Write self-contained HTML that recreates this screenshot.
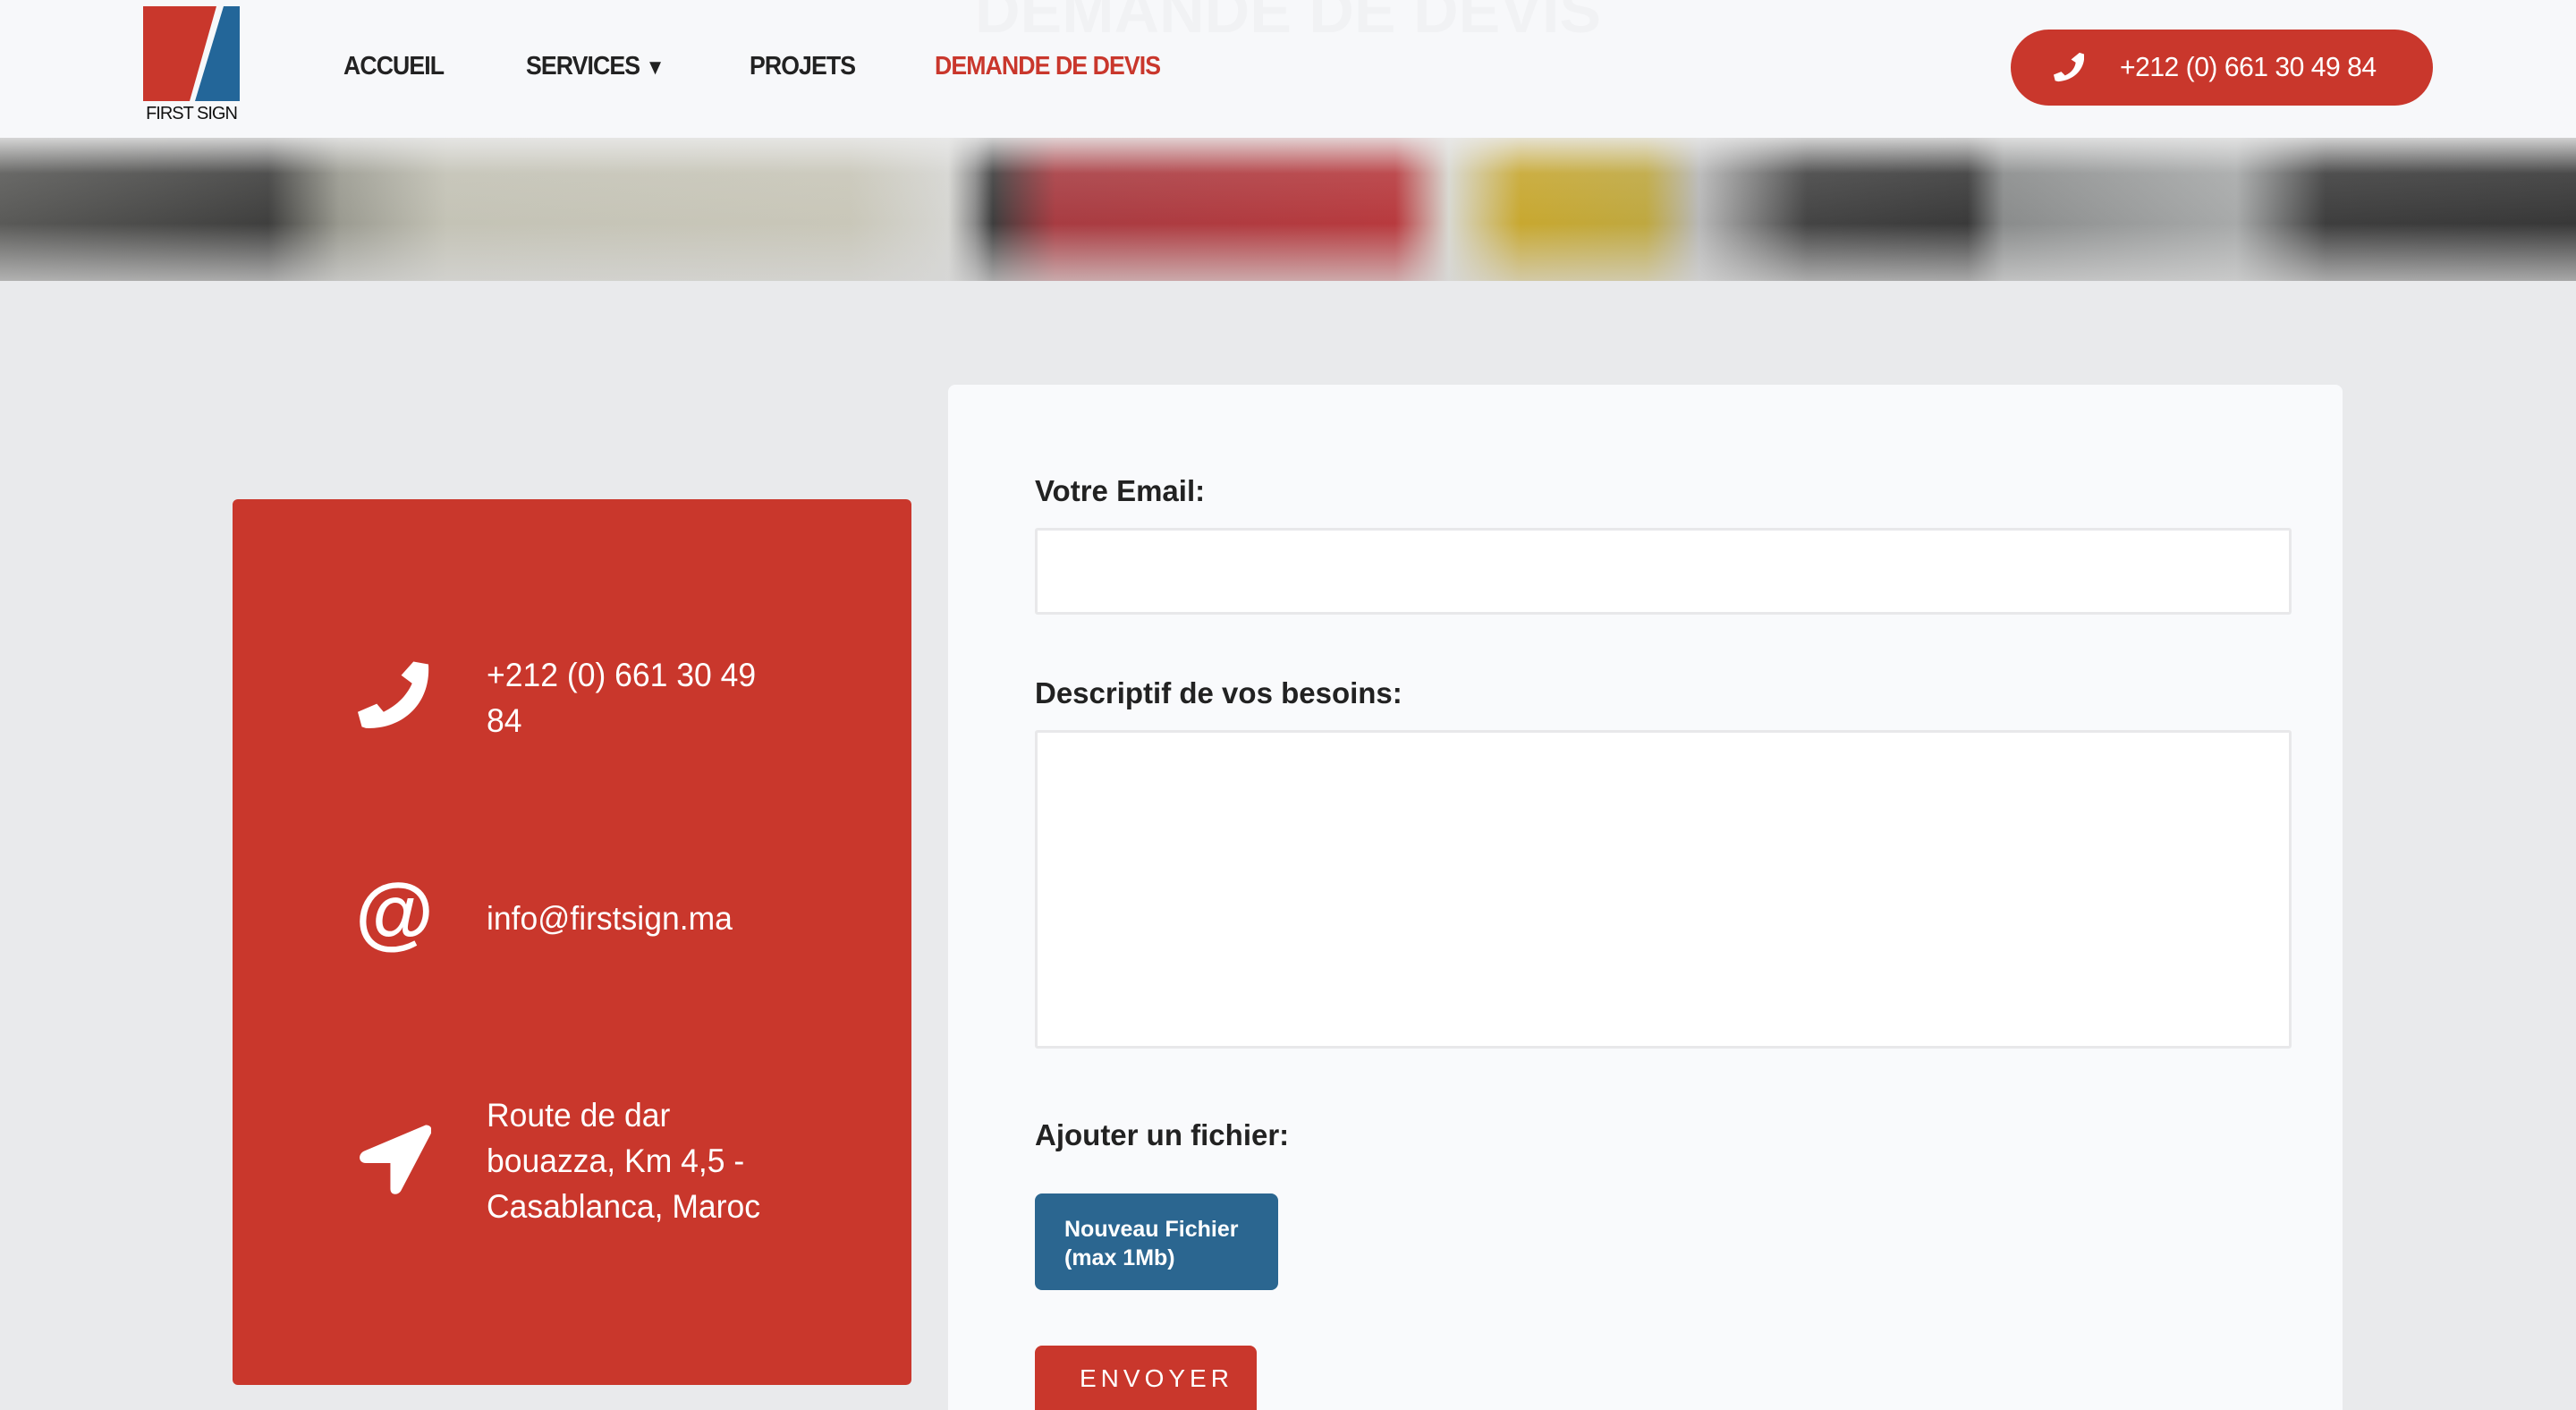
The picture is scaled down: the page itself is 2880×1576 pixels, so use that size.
<!DOCTYPE html>
<html><head><meta charset="utf-8"><style>
*{margin:0;padding:0;box-sizing:border-box}
html,body{width:2880px;height:1576px;overflow:hidden}
body{background:#e9eaec;font-family:"Liberation Sans",sans-serif;position:relative}
.abs{position:absolute}
header{position:absolute;left:0;top:0;width:2880px;height:154px;background:#f7f8fa}
.nav{position:absolute;top:58px;font-size:29px;font-weight:bold;color:#222;letter-spacing:-1px;transform:scaleX(0.92);transform-origin:left;white-space:nowrap}
.banner{position:absolute;left:0;top:154px;width:2880px;height:160px;overflow:hidden;
background:linear-gradient(90deg,#5a5a58 0,#3f3f3e 300px,#9a9a90 380px,#c4c3b6 500px,#c9c7b9 950px,#d6d6d2 1060px,#8a8a8a 1090px,#3e3e3e 1110px,#a83c42 1180px,#b83a3e 1560px,#d8d8d0 1620px,#c8a830 1700px,#bfa840 1840px,#b8b8b8 1900px,#444 2020px,#3a3a3a 2200px,#8a8c8c 2240px,#a8aaaa 2500px,#3e3e3e 2600px,#383838 2880px)}
.banner .fog{position:absolute;left:0;top:0;width:100%;height:100%;background:linear-gradient(180deg,rgba(235,235,235,.85) 0,rgba(235,235,235,0.1) 40px,rgba(255,255,255,0) 60%,rgba(215,215,215,.7) 100%)}
.red{position:absolute;left:260px;top:558px;width:759px;height:990px;background:#c9372c;border-radius:6px}
.red .t{position:absolute;left:284px;color:#fff;font-size:37px;line-height:51px;transform:scaleX(0.96);transform-origin:left}
.red svg{position:absolute;left:140px}
.card{position:absolute;left:1060px;top:430px;width:1559px;height:1200px;background:#f9fafc;border-radius:8px}
.lbl{position:absolute;left:97px;font-size:33px;color:#222;font-weight:bold}
.inp{position:absolute;left:97px;width:1405px;background:#fff;border:3px solid #e8e8ea;border-radius:3px}
</style></head><body>
<header>
  <div class="abs" style="left:1090px;top:-28px;font-size:70px;font-weight:bold;color:rgba(0,0,0,0.025);white-space:nowrap">DEMANDE DE DEVIS</div>
  <svg class="abs" style="left:160px;top:7px" width="108" height="106" viewBox="0 0 108 106">
    <polygon points="0,0 82,0 52,106 0,106" fill="#c9372c"/>
    <polygon points="90,0 108,0 108,106 58,106" fill="#236699"/>
  </svg>
  <div class="abs" style="left:160px;top:116px;font-size:20px;color:#111;width:108px;text-align:center;letter-spacing:-1px;white-space:nowrap">FIRST SIGN</div>
  <div class="nav" style="left:384px">ACCUEIL</div>
  <div class="nav" style="left:588px">SERVICES <span style="font-size:24px">&#9660;</span></div>
  <div class="nav" style="left:838px">PROJETS</div>
  <div class="nav" style="left:1045px;color:#c9372c">DEMANDE DE DEVIS</div>
  <div class="abs" style="left:2248px;top:33px;width:472px;height:85px;background:#c9372c;border-radius:43px"></div>
  <svg class="abs" style="left:2296px;top:57px" width="34" height="36" viewBox="0 0 40 42"><path d="M34 2 L40 4 C42 20 30 38 6 40 L2 39 L0 31 L10 27 L15 32 C24 28 28 22 29 15 L23 11 Z" fill="#fff"/></svg>
  <div class="abs" style="left:2370px;top:57px;font-size:31px;color:#fff;letter-spacing:-0.5px;white-space:nowrap;transform:scaleX(0.97);transform-origin:left">+212 (0) 661 30 49 84</div>
</header>
<div class="banner"><div class="fog"></div></div>

<div class="red">
  <svg style="top:180px" width="82" height="82" viewBox="0 0 54 52"><path d="M41 0 L52 2 C54 30 34 50 6 49 L3 48 L0 37 L14 31 L19 37 C29 32 36 25 40 16 L32 10 Z" fill="#fff"/></svg>
  <div class="t" style="top:171px">+212 (0) 661 30 49<br>84</div>
  <svg style="top:426px" width="82" height="82" viewBox="0 0 82 82"><text x="41" y="66" text-anchor="middle" font-family="Liberation Sans" font-weight="bold" font-size="90" fill="#fff">@</text></svg>
  <div class="t" style="top:443px">info@firstsign.ma</div>
  <svg style="top:698px" width="82" height="82" viewBox="0 0 54 52"><path d="M50 0 C54 0 55 3 54 6 L32 48 C30 52 24 52 24 47 L24 28 L6 28 C0 28 0 21 5 19 Z" fill="#fff"/></svg>
  <div class="t" style="top:663px">Route de dar<br>bouazza, Km 4,5 -<br>Casablanca, Maroc</div>
</div>

<div class="card">
  <div class="lbl" style="top:100px">Votre Email:</div>
  <div class="inp" style="top:160px;height:97px"></div>
  <div class="lbl" style="top:326px">Descriptif de vos besoins:</div>
  <div class="inp" style="top:386px;height:356px"></div>
  <div class="lbl" style="top:820px">Ajouter un fichier:</div>
  <div class="abs" style="left:97px;top:904px;width:272px;height:108px;background:#2b6690;border-radius:8px;color:#fff;font-size:25px;font-weight:bold;padding:24px 0 0 33px;line-height:32px">Nouveau Fichier<br>(max 1Mb)</div>
  <div class="abs" style="left:97px;top:1074px;width:248px;height:110px;background:#c9372c;border-radius:8px;color:#fff;font-size:28px;letter-spacing:5px;padding:21px 0 0 50px">ENVOYER</div>
</div>
</body></html>
